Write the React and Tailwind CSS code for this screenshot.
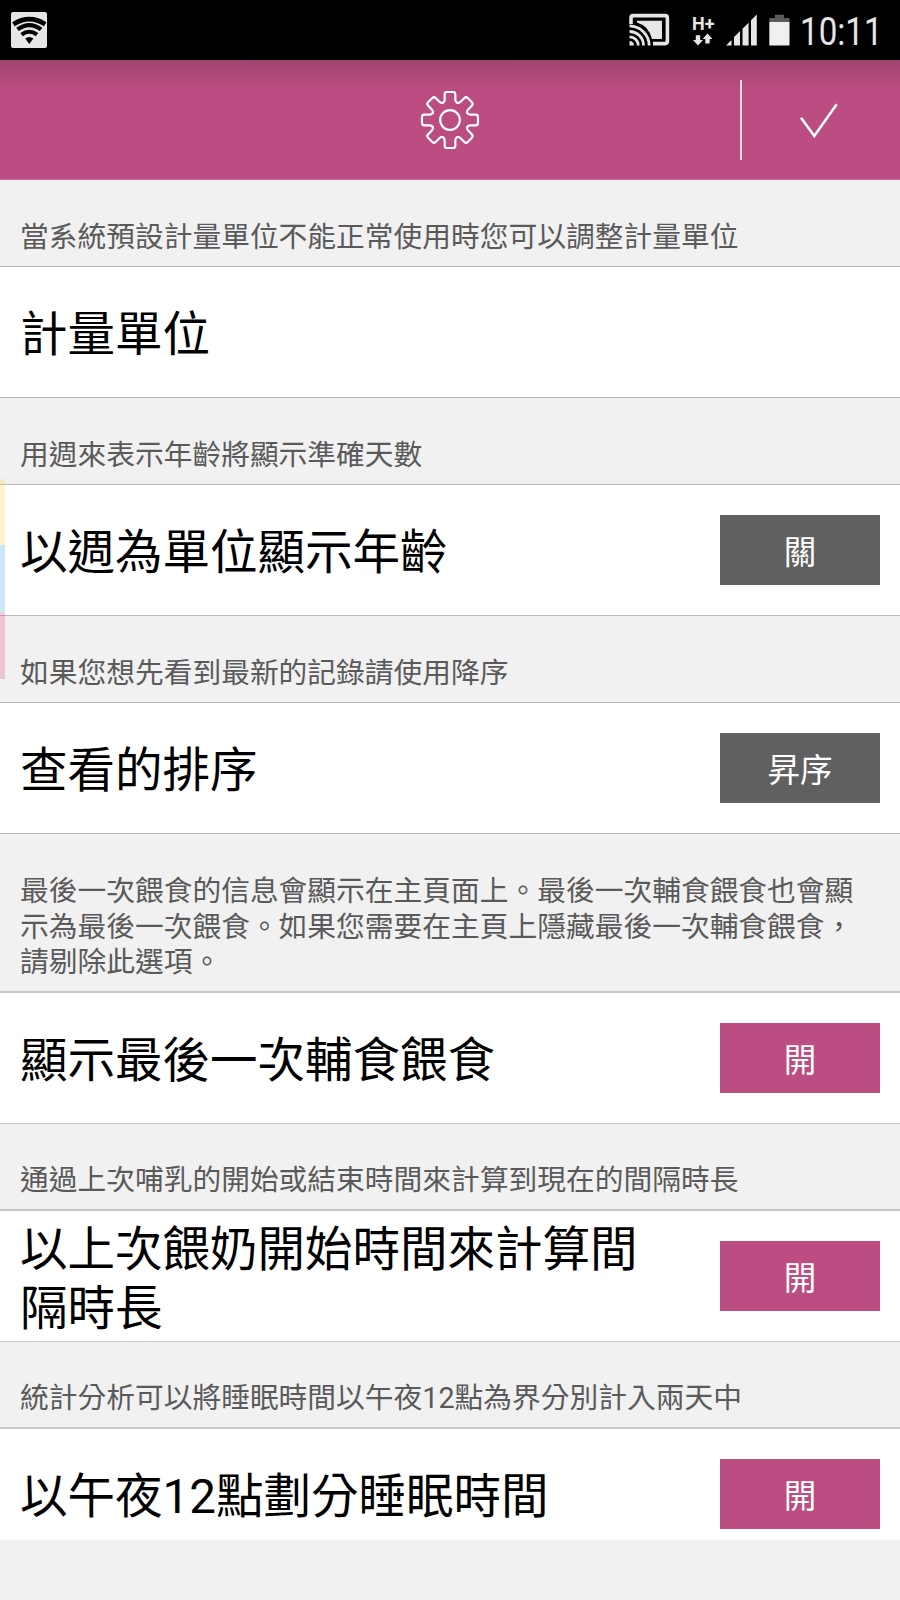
import { useState } from "react";
import clsx from "clsx";

const sections = [
  {
    id: "unit",
    note: "當系統預設計量單位不能正常使用時您可以調整計量單位",
    title: "計量單位",
    noteSize: "h-[86px]",
    rowSize: "h-[132px] border-y border-[#b9b9b9]",
  },
  {
    id: "weeks",
    note: "用週來表示年齡將顯示準確天數",
    title: "以週為單位顯示年齡",
    labels: ["關", "開"],
    on: false,
    noteSize: "h-[86px]",
    rowSize: "h-[132px] border-y border-[#b9b9b9]",
  },
  {
    id: "order",
    note: "如果您想先看到最新的記錄請使用降序",
    title: "查看的排序",
    labels: ["昇序", "降序"],
    on: false,
    noteSize: "h-[86px]",
    rowSize: "h-[132px] border-y border-[#b9b9b9]",
  },
  {
    id: "lastFeed",
    note: "最後一次餵食的信息會顯示在主頁面上。最後一次輔食餵食也會顯示為最後一次餵食。如果您需要在主頁上隱藏最後一次輔食餵食，請剔除此選項。",
    title: "顯示最後一次輔食餵食",
    labels: ["關", "開"],
    on: true,
    noteSize: "h-[157px]",
    rowSize: "h-[133px] border-t-2 border-b border-[#c8c8c8]",
  },
  {
    id: "interval",
    note: "通過上次哺乳的開始或結束時間來計算到現在的間隔時長",
    title: "以上次餵奶開始時間來計算間隔時長",
    labels: ["關", "開"],
    on: true,
    noteSize: "h-[85px]",
    rowSize: "h-[133px] border-t-2 border-b border-[#c8c8c8]",
  },
  {
    id: "midnight",
    note: "統計分析可以將睡眠時間以午夜12點為界分別計入兩天中",
    title: "以午夜12點劃分睡眠時間",
    labels: ["關", "開"],
    on: true,
    noteSize: "h-[85px]",
    rowSize: "h-[113px] border-t-2 border-[#c8c8c8]",
    last: true,
  },
];

const teeth = [0, 45, 90, 135, 180, 225, 270, 315];

const GearIcon = () => (
  <svg width="60" height="60" viewBox="-90 -90 180 180" fill="none" stroke="#fff" strokeWidth="6.5" strokeLinecap="round">
    {teeth.map((angle) => (
      <path
        key={angle}
        transform={`rotate(${angle})`}
        d="M-21.4 -51.7 Q-16 -54 -16 -61 V-77 Q-16 -84 -9 -84 H9 Q16 -84 16 -77 V-61 Q16 -54 21.4 -51.7"
      />
    ))}
    <circle r="29.5" />
  </svg>
);

const StatusBar = () => (
  <div className="flex h-[60px] items-start justify-between bg-black">
    <svg className="mt-3 ml-[11px]" width="36" height="36" viewBox="0 0 36 36" fill="none">
      <rect width="36" height="36" rx="2" fill="#e6e6e6" />
      <path d="M18.3 32 L14.2 26.6 Q18.3 23.6 22.4 26.6 Z" fill="#000" />
      <path d="M10.6 22.6 Q18.3 16.8 26 22.6" stroke="#000" strokeWidth="4" />
      <path d="M6.5 17.4 Q18.3 8.8 30.1 17.4" stroke="#000" strokeWidth="4.2" />
      <path d="M2.4 12.2 Q18.3 2 34.2 12.2" stroke="#000" strokeWidth="4.6" />
    </svg>

    <div className="flex h-[60px]">
      {/* Cast, network, signal and battery */}
      <svg width="185" height="60" viewBox="610 0 185 60" fill="none">
        <path d="M631 24 V18 Q631 15.6 633.4 15.6 H665 Q667.4 15.6 667.4 18 V41 Q667.4 43.6 665 43.6 H653" stroke="#e6e6e6" strokeWidth="3.6" />
        <path d="M637 20.8 H662 V39 H652 Q649 26 637 22.5 Z" fill="#e6e6e6" />
        <path d="M629.5 25.8 A20 20 0 0 1 649.2 45.5" stroke="#e6e6e6" strokeWidth="2.8" />
        <path d="M629.5 31.5 A14 14 0 0 1 643.5 45.5" stroke="#e6e6e6" strokeWidth="2.8" />
        <path d="M629.5 36.8 A8.7 8.7 0 0 1 638.2 45.5" stroke="#e6e6e6" strokeWidth="2.8" />
        <path d="M629.5 41 A4.5 4.5 0 0 1 634 45.5 H629.5 Z" fill="#e6e6e6" />
        <text x="692" y="30" fill="#e6e6e6" className="font-['Roboto',sans-serif] text-[19px] font-bold" textLength="22.5" lengthAdjust="spacingAndGlyphs">H+</text>
        <path d="M695.8 35.2 H700.2 V40 H703 L698 45.5 L693 40 H695.8 Z" fill="#e6e6e6" />
        <path d="M705.3 43.5 H709.7 V39 H712.5 L707.5 33.5 L702.5 39 H705.3 Z" fill="#e6e6e6" />
        <path d="M726 45.5 L731.5 40 V45.5 Z M734 45.5 V37 L740 31 V45.5 Z M742.5 45.5 V28.8 L748.6 22.7 V45.5 Z M751 45.5 V20.3 L756.8 14.5 V45.5 Z" fill="#e6e6e6" />
        <path d="M769.3 22 V18 H775 V14.8 H784 V18 H789.5 V22 Z" fill="#5c5c5c" />
        <path d="M769.3 22 H789.5 V45.5 H769.3 Z" fill="#f0f0f0" />
      </svg>
      <div className="w-[105px] pl-[5px] pt-[9px]">
        <span className="inline-block origin-left scale-x-[0.85] font-['Roboto',sans-serif] text-[39px] leading-[46px] text-[#e6e6e6]">10:11</span>
      </div>
    </div>
  </div>
);

const Header = () => (
  <header className="grid h-[120px] grid-cols-[1fr_60px_1fr] items-center border-b border-[#c56c97] bg-linear-to-b from-[#a04470] to-[#bc4d82] to-[30px]">
    <div />
    <GearIcon />
    <div className="flex justify-end">
      <button type="button" className="flex h-20 w-40 items-center justify-center border-l-2 border-[#f1dce7] pr-1">
        <svg width="40" height="36" viewBox="799 102 40 36" fill="none" stroke="#fff" strokeWidth="2.5">
          <path d="M801 117.8 L814.3 136 L836.7 104.2" />
        </svg>
      </button>
    </div>
  </header>
);

const Toggle = ({ on, labels, onClick }) => (
  <button
    type="button"
    onClick={onClick}
    className={clsx(
      "h-[70px] w-40 shrink-0 pt-1.5 text-[32.5px] leading-none text-white",
      on ? "bg-[#bc4d82]" : "bg-[#606060]"
    )}
  >
    {on ? labels[1] : labels[0]}
  </button>
);

const App = () => {
  const [values, setValues] = useState(
    Object.fromEntries(sections.map((s) => [s.id, s.on]))
  );

  const toggle = (id) => {
    setValues({ ...values, [id]: !values[id] });
  };

  return (
    <div
      lang="zh-Hant"
      className="relative h-[1600px] w-[900px] overflow-hidden bg-[#f1f1f1] font-['Roboto','Noto_Sans_CJK_TC',sans-serif]"
    >
      <StatusBar />
      <Header />

      <main>
        {sections.map((s) => (
          <section key={s.id}>
            <p className={clsx("flex items-end pr-6 pb-[10px] pl-5 text-[28.74px] leading-[35.7px] text-[#5a5a5a]", s.noteSize)}>
              {s.note}
            </p>
            <div className={clsx("flex justify-between bg-white px-5", s.last ? "items-start pt-[30px]" : "items-center", s.rowSize)}>
              <h2 className={clsx("w-[640px] text-[47.5px] leading-[58.5px] text-black", s.last ? "mt-[9px]" : "pt-[7px]")}>{s.title}</h2>
              {s.labels && (
                <Toggle on={values[s.id]} labels={s.labels} onClick={() => toggle(s.id)} />
              )}
            </div>
          </section>
        ))}
      </main>

      {/* Side tabs peeking in from the left edge */}
      <div className="absolute top-[479px] left-0 w-[5px]">
        <div className="h-[66px] bg-[#ffcc44]/25" />
        <div className="h-[67px] bg-[#33a5dd]/25" />
        <div className="h-[67px] bg-[#dd4488]/25" />
      </div>
    </div>
  );
};

export default App;
